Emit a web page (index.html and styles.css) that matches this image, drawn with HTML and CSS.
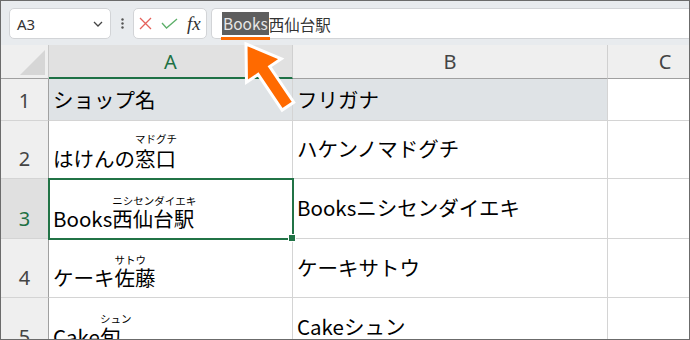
FILE: index.html
```html
<!DOCTYPE html>
<html lang="ja">
<head>
    <meta charset="UTF-8">
    <title>フリガナ</title>
    <link rel="stylesheet" href="styles.css">
</head>
<body>
    <div class="window">
        <!-- formula bar -->
        <div class="fbar">
            <div class="namebox">
                <span>A3</span>
                <svg width="10" height="6" viewBox="0 0 10 6"><polyline points="1,1 5,5 9,1" fill="none" stroke="#444" stroke-width="1.3"/></svg>
            </div>
            <div class="grip">
                <svg width="3" height="11" viewBox="0 0 3 11"><circle cx="1.5" cy="1.5" r="1.2" fill="#555"/><circle cx="1.5" cy="5.5" r="1.2" fill="#555"/><circle cx="1.5" cy="9.5" r="1.2" fill="#555"/></svg>
            </div>
            <div class="fxbox">
                <svg width="13" height="13" viewBox="0 0 13 13"><path d="M1 1L12 12M12 1L1 12" stroke="#e5615b" stroke-width="1.3" fill="none"/></svg>
                <svg width="17" height="11" viewBox="0 0 17 11"><polyline points="1,5 5.5,10 16,1" fill="none" stroke="#5daf6a" stroke-width="1.3"/></svg>
                <span class="fx">fx</span>
            </div>
            <div class="formula"><span class="sel">Books</span>西仙台駅</div>
        </div>

        <!-- sheet -->
        <div class="sheet">
            <div class="corner"><span class="tri"></span></div>
            <div class="colhead active-col">A</div>
            <div class="colhead">B</div>
            <div class="colhead">C</div>

            <div class="rowhead">1</div>
            <div class="cell title">ショップ名</div>
            <div class="cell title">フリガナ</div>
            <div class="cell"></div>

            <div class="rowhead">2</div>
            <div class="cell name">はけんの<span class="ph">窓口<span class="yomi wide">マドグチ</span></span></div>
            <div class="cell kana">ハケンノマドグチ</div>
            <div class="cell"></div>

            <div class="rowhead active-row">3</div>
            <div class="cell name active">Books<span class="ph">西仙台駅<span class="yomi">ニシセンダイエキ</span></span></div>
            <div class="cell kana">Booksニシセンダイエキ</div>
            <div class="cell"></div>

            <div class="rowhead">4</div>
            <div class="cell name">ケーキ<span class="ph">佐藤<span class="yomi">サトウ</span></span></div>
            <div class="cell kana">ケーキサトウ</div>
            <div class="cell"></div>

            <div class="rowhead">5</div>
            <div class="cell name">Cake<span class="ph">旬<span class="yomi">シュン</span></span></div>
            <div class="cell kana">Cakeシュン</div>
            <div class="cell"></div>
        </div>

        <svg class="arrow" width="690" height="340" viewBox="0 0 690 340">
            <polygon transform="translate(245,43) rotate(-34)" points="0,0 21,32 7,32 7,75 -7,75 -7,32 -21,32" fill="#ff6a00" stroke="#fff" stroke-width="3" stroke-linejoin="miter"/>
        </svg>
    </div>
</body>
</html>
```

FILE: styles.css
```css
* {
    margin: 0;
    padding: 0;
    box-sizing: border-box;
}

body {
    background: #fff;
}

.window {
    position: relative;
    width: 690px;
    height: 340px;
    border: 1px solid #6b6b6b;
    overflow: hidden;
    font-family: "Noto Sans CJK JP", sans-serif;
}

/* Formula bar */
.fbar {
    display: flex;
    align-items: center;
    height: 44px;
    padding: 1px 0 0 8px;
    background: #e8ebee;
}

.namebox {
    width: 102px;
    height: 31px;
    background: #fff;
    border: 1px solid #d2d4d7;
    border-radius: 5px;
    display: flex;
    align-items: center;
    justify-content: space-between;
    padding: 0 7px 0 7px;
    font-family: "Noto Sans", sans-serif;
    font-size: 15px;
    color: #333;
}

.grip {
    width: 22px;
    display: flex;
    justify-content: center;
}

.fxbox {
    width: 74px;
    height: 31px;
    background: #fff;
    border: 1px solid #d2d4d7;
    border-radius: 5px;
    display: flex;
    align-items: center;
    gap: 9px;
    padding-left: 5px;
    margin-right: 4px;
}

.fx {
    font-family: "Liberation Serif", serif;
    font-style: italic;
    font-size: 19px;
    color: #333;
    line-height: 1;
}

.formula {
    flex: 1;
    height: 31px;
    background: #fff;
    border: 1px solid #d2d4d7;
    border-right: none;
    border-radius: 5px 0 0 5px;
    display: flex;
    align-items: center;
    padding-left: 10px;
    font-size: 15.5px;
    color: #333;
}

.sel {
    position: relative;
    background: #5e5e5e;
    color: #e6e6e6;
    line-height: 23px;
    padding: 0 1px;
}

.sel::after {
    content: "";
    position: absolute;
    left: -1px;
    right: -1px;
    bottom: -5px;
    height: 3px;
    background: #ff6a00;
}

/* Sheet grid */
.sheet {
    display: grid;
    grid-template-columns: 48px 244px 315px 115px;
    grid-template-rows: 34px 42px 58px 60px 59px 59px;
    width: 722px;
}

.corner {
    background: #efefef;
    border-right: 1px solid #c9c9c9;
    border-bottom: 1px solid #a0a0a0;
    position: relative;
}

.tri {
    position: absolute;
    right: 3px;
    bottom: 3px;
    width: 0;
    height: 0;
    border-left: 25px solid transparent;
    border-bottom: 25px solid #d6d6d6;
}

.colhead {
    background: #efefef;
    border-right: 1px solid #d0d0d0;
    border-bottom: 1px solid #a0a0a0;
    display: flex;
    align-items: center;
    justify-content: center;
    font-family: "Noto Sans", sans-serif;
    font-size: 20px;
    color: #444;
}

.active-col {
    background: #e1e1e1;
    color: #1e7145;
    border-bottom: 2px solid #1e7145;
}

.rowhead {
    background: #efefef;
    border-right: 1px solid #a0a0a0;
    border-bottom: 1px solid #d4d4d4;
    display: flex;
    align-items: flex-end;
    justify-content: center;
    padding-bottom: 9px;
    font-family: "Noto Sans", sans-serif;
    font-size: 20px;
    line-height: 1;
    color: #444;
}

.active-row {
    background: #e0e0e0;
    color: #1e7145;
}

.cell {
    border-right: 1px solid #d4d4d4;
    border-bottom: 1px solid #d4d4d4;
    display: flex;
    align-items: flex-end;
    padding: 0 0 10px 4px;
    font-size: 20.5px;
    line-height: 1;
    color: #000;
    white-space: nowrap;
}

.title {
    background: #dfe3e6;
    padding-bottom: 11px;
}

.kana {
    align-items: center;
    padding-bottom: 2px;
}

.active {
    position: relative;
    outline: 2px solid #217346;
    outline-offset: -1px;
    z-index: 1;
}

.active::after {
    content: "";
    position: absolute;
    right: -4px;
    bottom: -4px;
    width: 6px;
    height: 6px;
    background: #217346;
    border: 1px solid #fff;
}

/* Phonetic guide over kanji */
.ph {
    position: relative;
}

.yomi {
    position: absolute;
    left: 0;
    bottom: calc(100% + 1px);
    font-size: 10.5px;
    line-height: 1;
}

.yomi.wide {
    bottom: calc(100% + 3px);
}

.arrow {
    position: absolute;
    left: 0;
    top: 0;
    pointer-events: none;
}
```
